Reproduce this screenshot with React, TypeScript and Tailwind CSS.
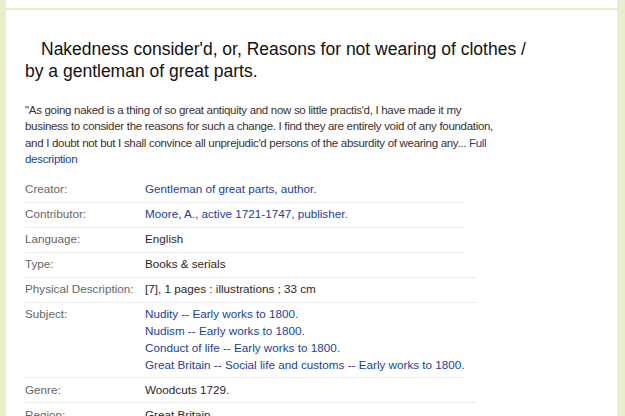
const LINK = 'text-[#1b3f9a]'

interface Fila {
  etiqueta: string
  valores: string[]
  enlace?: boolean
  ancho: string
}

const FILAS: Fila[] = [
  { etiqueta: 'Creator:', valores: ['Gentleman of great parts, author.'], enlace: true, ancho: 'w-[440px]' },
  { etiqueta: 'Contributor:', valores: ['Moore, A., active 1721-1747, publisher.'], enlace: true, ancho: 'w-[440px]' },
  { etiqueta: 'Language:', valores: ['English'], ancho: 'w-[440px]' },
  { etiqueta: 'Type:', valores: ['Books & serials'], ancho: 'w-[452px]' },
  { etiqueta: 'Physical Description:', valores: ['[7], 1 pages : illustrations ; 33 cm'], ancho: 'w-[452px]' },
  {
    etiqueta: 'Subject:',
    valores: [
      'Nudity -- Early works to 1800.',
      'Nudism -- Early works to 1800.',
      'Conduct of life -- Early works to 1800.',
      'Great Britain -- Social life and customs -- Early works to 1800.',
    ],
    enlace: true,
    ancho: 'w-[440px]',
  },
  { etiqueta: 'Genre:', valores: ['Woodcuts 1729.'], ancho: 'w-[452px]' },
  { etiqueta: 'Region:', valores: ['Great Britain'], ancho: 'w-[452px]' },
]

export default function App() {
  return (
    <div className="h-[416px] w-[625px] overflow-hidden bg-[#e9efcc] pl-[6px] pr-[8px] font-['Liberation_Sans',Arial,sans-serif]">
      <div className="h-full bg-white">
        <div className="h-[8px]" />
        <div className="border-t-2 border-[#e9efcc] px-[19px] pt-[28px]">
          <h1 className="w-[515px] indent-4 text-[17.5px] leading-[22px] text-[#111]">
            Nakedness consider'd, or, Reasons for not wearing of clothes / by a gentleman of great parts.
          </h1>

          <p className="mt-[20px] w-[476px] text-[11.5px] leading-[16.4px] tracking-[-0.3px] text-[#3a3030]">
            "As going naked is a thing of so great antiquity and now so little practis'd, I have made it my business to consider the reasons for such a change. I find they are entirely void of any foundation, and I doubt not but I shall convince all unprejudic'd persons of the absurdity of wearing any...{' '}
            <a className={LINK}>Full description</a>
          </p>

          <div className="mt-[10px] text-[11.7px] leading-[16.8px]">
            {FILAS.map((fila, i) => (
              <div key={fila.etiqueta} className={`${fila.ancho} flex py-[3.6px] ${i < FILAS.length - 1 ? 'border-b border-[#ececec]' : ''}`}>
                <div className="w-[120px] shrink-0 text-[#666]">{fila.etiqueta}</div>
                <div className="flex flex-col whitespace-nowrap">
                  {fila.valores.map((v) => (
                    <span key={v} className={fila.enlace ? LINK : 'text-[#2f2626]'}>
                      {v}
                    </span>
                  ))}
                </div>
              </div>
            ))}
          </div>
        </div>
      </div>
    </div>
  )
}
